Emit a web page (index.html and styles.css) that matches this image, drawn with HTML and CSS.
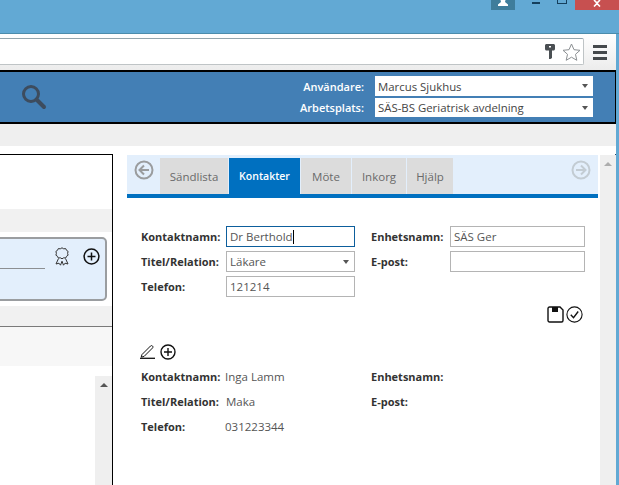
FILE: index.html
```html
<!DOCTYPE html>
<html lang="sv">
<head>
<meta charset="utf-8">
<title>Kontakter</title>
<link rel="stylesheet" href="styles.css">
</head>
<body>
<div class="window">
  <div class="titlebar">
    <div class="avatar"><svg width="12" height="6" viewBox="0 0 12 6"><path d="M3.500 0h5L8 2l3 2.500V6H1V4.500L4 2z" fill="#fff"/></svg></div>
    <div class="win-min"></div>
    <div class="win-max"></div>
    <div class="win-close"><svg width="10" height="7" viewBox="0 0 10 7"><path d="M2 0l3 3 3-3M2 6.500l3-3 3 3" stroke="#fff" stroke-width="1.600" fill="none"/></svg></div>
  </div>
  <div class="chrome">
    <div class="toolbar">
      <div class="address">
        <svg class="key" width="10" height="15" viewBox="0 0 10 15"><path d="M0 1.500C0 .7.700 0 1.500 0h7C9.300 0 10 .7 10 1.500V5c0 .8-.7 1.500-1.500 1.500H7V14l-1.500 1H4V6.500H1.500C.7 6.500 0 5.800 0 5zM4 2v1.500h2V2z" fill="#4a4f53" fill-rule="evenodd"/></svg>
        <svg class="star" width="19" height="18" viewBox="0 0 19 18"><path d="M9.500 1l2.500 5.700 6 .6-4.500 4 1.300 6-5.300-3.100-5.300 3.100 1.300-6-4.500-4 6-.6z" fill="#fff" stroke="#8b8f92" stroke-width="1"/></svg>
      </div>
      <div class="menu"><span></span><span></span><span></span></div>
    </div>
    <header class="app-header">
      <svg class="search" width="26" height="26" viewBox="0 0 26 26"><circle cx="10" cy="10" r="7.500" fill="none" stroke="#3d4c5e" stroke-width="3"/><path d="M15.500 15.500l7.500 7.500" stroke="#3d4c5e" stroke-width="4" stroke-linecap="round"/></svg>
      <div class="user-grid">
        <label class="user-label">Användare:</label>
        <div class="user-select"><span>Marcus Sjukhus</span><i class="caret"></i></div>
        <label class="user-label">Arbetsplats:</label>
        <div class="user-select"><span>SÄS-BS Geriatrisk avdelning</span><i class="caret"></i></div>
      </div>
    </header>
    <div class="strip"></div>
    <main class="main">
      <section class="left">
        <div class="left-top"></div>
        <div class="band"></div>
        <div class="card">
          <div class="card-line"></div>
          <svg class="ribbon" width="14" height="19" viewBox="0 0 14 19"><path d="M7 .8l1.700 1 2-.2.800 1.700 1.600 1.100-.5 1.900.5 1.900-1.600 1.100-.8 1.700-2-.2-1.700 1-1.700-1-2 .2-.8-1.700L.9 8.200l.5-1.900-.5-1.900 1.600-1.100.8-1.700 2 .2z" fill="none" stroke="#333" stroke-width="1"/><path d="M3.500 11.500L1 17l3-.8 1.500 2 1.500-4 1.500 4 1.500-2 3 .8-2.500-5.500" fill="none" stroke="#333" stroke-width="1"/></svg>
          <svg class="plus" width="17" height="17" viewBox="0 0 17 17"><circle cx="8.500" cy="8.500" r="7.400" fill="none" stroke="#111" stroke-width="1.500"/><path d="M8.500 4.500v8M4.500 8.500h8" stroke="#111" stroke-width="1.500"/></svg>
        </div>
        <div class="band band-line"></div>
        <div class="band-light"></div>
        <div class="left-scroll"><i class="up"></i></div>
      </section>
      <section class="right">
        <nav class="tabbar">
          <svg class="nav-arrow" width="20" height="20" viewBox="0 0 20 20"><circle cx="10" cy="10" r="8.500" fill="none" stroke="#9a9c9e" stroke-width="2"/><path d="M15 10H6M10 5.500L5.500 10l4.500 4.500" fill="none" stroke="#9a9c9e" stroke-width="2"/></svg>
          <div class="tab tab-s">Sändlista</div>
          <div class="tab tab-k active">Kontakter</div>
          <div class="tab tab-m">Möte</div>
          <div class="tab tab-i">Inkorg</div>
          <div class="tab tab-h">Hjälp</div>
          <svg class="nav-arrow nav-next" width="20" height="20" viewBox="0 0 20 20"><circle cx="10" cy="10" r="8.500" fill="none" stroke="#c3ccd3" stroke-width="2"/><path d="M5 10h9M10 5.500l4.500 4.500-4.500 4.500" fill="none" stroke="#c3ccd3" stroke-width="2"/></svg>
        </nav>
        <div class="form">
          <label class="lbl">Kontaktnamn:</label>
          <div class="field focus">Dr Berthold<i class="cursor"></i></div>
          <label class="lbl lbl-second">Enhetsnamn:</label>
          <div class="field">SÄS Ger</div>
          <label class="lbl">Titel/Relation:</label>
          <div class="field select">Läkare<i class="caret"></i></div>
          <label class="lbl lbl-second">E-post:</label>
          <div class="field"></div>
          <label class="lbl">Telefon:</label>
          <div class="field">121214</div>
        </div>
        <div class="actions">
          <svg width="17" height="17" viewBox="0 0 17 17"><path d="M1 2.500C1 1.700 1.700 1 2.500 1H13l3 3v10.500c0 .8-.7 1.500-1.500 1.500h-12C1.700 16 1 15.300 1 14.500z" fill="none" stroke="#111" stroke-width="1.400"/><path d="M5 1h6v5H5z" fill="#111"/></svg>
          <svg width="17" height="17" viewBox="0 0 17 17"><circle cx="8.500" cy="8.500" r="7.600" fill="none" stroke="#111" stroke-width="1.100"/><path d="M4.800 8.800l2.700 2.900 4.700-6.200" fill="none" stroke="#111" stroke-width="1.400"/></svg>
        </div>
        <div class="edit-row">
          <svg width="16" height="15" viewBox="0 0 16 15"><path d="M2 10.500L10.500 2c.6-.6 1.400-.6 2 0s.6 1.400 0 2L4 12.500l-2.800.6z" fill="none" stroke="#111" stroke-width="1"/><path d="M0 14.300h15" stroke="#111" stroke-width="1.300"/></svg>
          <svg width="16" height="16" viewBox="0 0 16 16"><circle cx="8" cy="8" r="7" fill="none" stroke="#111" stroke-width="1.400"/><path d="M8 4v8M4 8h8" stroke="#111" stroke-width="1.400"/></svg>
        </div>
        <div class="details">
          <span class="lbl">Kontaktnamn:</span><span class="val">Inga Lamm</span><span class="lbl">Enhetsnamn:</span><span></span>
          <span class="lbl">Titel/Relation:</span><span class="val val-shift">Maka</span><span class="lbl">E-post:</span><span></span>
          <span class="lbl">Telefon:</span><span class="val">031223344</span><span></span><span></span>
        </div>
      </section>
      <aside class="right-scroll"><i class="up up-light"></i></aside>
    </main>
  </div>
</div>
</body>
</html>
```
FILE: styles.css
```css
* { box-sizing: border-box; }
html, body { margin: 0; padding: 0; }
body {
  width: 619px;
  height: 485px;
  overflow: hidden;
  font-family: "Open Sans", "Noto Sans", sans-serif;
  font-size: 11px;
  color: #333;
}
.window {
  width: 619px;
  height: 485px;
  background: #62a9d4;
  display: flex;
  flex-direction: column;
  overflow: hidden;
}
.titlebar {
  height: 34px;
  flex: none;
  display: flex;
  align-items: flex-start;
  border-bottom: 1px solid #4b8cac;
}
.avatar {
  width: 24px;
  height: 10px;
  margin-left: 491px;
  background: #3f7d9b;
  display: flex;
  justify-content: center;
  align-items: flex-start;
}
.win-min { width: 8px; height: 2px; margin: 2px 0 0 17px; background: #153f5c; }
.win-max { width: 10px; height: 4px; margin-left: 17px; border: 1px solid #153f5c; border-top: 0; }
.win-close {
  width: 44px;
  height: 10px;
  margin-left: 8px;
  background: #c75050;
  display: flex;
  justify-content: center;
  align-items: flex-start;
}
.chrome {
  width: 616px;
  flex: 1;
  min-height: 0;
  display: flex;
  flex-direction: column;
  background: #fff;
  border-top-right-radius: 3px;
}
.toolbar {
  height: 36px;
  flex: none;
  padding-top: 4px;
  display: flex;
  align-items: flex-start;
  background: linear-gradient(#fff, #ececec);
}
.address {
  width: 584px;
  height: 27px;
  background: #fff;
  border: 1px solid #bfc4c6;
  border-top-color: #93a5ad;
  border-left: 0;
  border-radius: 0 2px 2px 0;
  display: flex;
  align-items: flex-start;
}
.key { margin: 5px 0 0 545px; }
.star { margin: 4px 0 0 7px; }
.menu {
  width: 14px;
  margin: 7px 0 0 9px;
  display: flex;
  flex-direction: column;
  gap: 3px;
}
.menu span { height: 3px; background: #45494c; }
.app-header {
  height: 54px;
  flex: none;
  background: #437fb5;
  border: solid #000;
  border-width: 2px 1px 2px 0;
  display: flex;
  justify-content: space-between;
  padding: 4px 22px 0 21px;
}
.search { margin-top: 8px; }
.user-grid {
  display: grid;
  grid-template-columns: auto 218px;
  grid-template-rows: 20px 19px;
  column-gap: 11px;
  row-gap: 2px;
  align-items: center;
}
.user-label { color: #fff; text-align: right; font-weight: 600; font-size: 11px; }
.user-select {
  height: 100%;
  background: #fff;
  color: #444;
  font-size: 11.400px;
  padding: 0 5px 0 3px;
  display: flex;
  align-items: center;
  justify-content: space-between;
}
.caret {
  width: 0;
  height: 0;
  border: 3.500px solid transparent;
  border-top: 4px solid #555;
  border-bottom: 0;
  flex: none;
}
.strip { height: 22px; flex: none; background: #efefef; }
.main {
  flex: 1;
  min-height: 0;
  margin-top: 8px;
  display: flex;
  align-items: stretch;
  border-right: 1px solid #2c4c66;
}
.left {
  width: 113px;
  flex: none;
  border-top: 1px solid #000;
  border-right: 1px solid #000;
  display: flex;
  flex-direction: column;
}
.left-top { height: 54px; flex: none; }
.band { height: 23px; flex: none; background: #f1f1f1; }
.band-line { height: 21px; border-bottom: 1px solid #7a7a7a; }
.band-light { height: 39px; flex: none; background: #f7f7f7; }
.card {
  height: 64px;
  flex: none;
  margin: 5px 5px 5px -10px;
  background: #e3effc;
  border: 2px solid #9a9da0;
  border-radius: 5px;
  display: flex;
  align-items: flex-start;
  padding: 8px 5px 0 0;
}
.card-line { width: 53px; height: 22px; border-bottom: 1px solid #8c8f92; flex: none; }
.ribbon { margin-left: 10px; flex: none; }
.plus { margin-left: 14px; margin-top: 1px; flex: none; }
.left-scroll {
  width: 17px;
  flex: 1;
  align-self: flex-end;
  margin-top: 10px;
  background: #efefef;
  display: flex;
  justify-content: center;
  padding-top: 7px;
}
.up {
  width: 0;
  height: 0;
  border: 4px solid transparent;
  border-bottom: 4px solid #555;
  border-top: 0;
}
.up-light { border-bottom-color: #adadad; }
.right {
  width: 471px;
  flex: none;
  margin-left: 14px;
}
.tabbar {
  height: 43px;
  margin-top: 1px;
  padding: 3px 7px 0 7px;
  background: #e3effc;
  border-bottom: 4px solid #0070c0;
  display: flex;
  align-items: stretch;
  column-gap: 1px;
}
.nav-arrow { flex: none; margin-top: 2px; margin-right: 5px; }
.nav-next { margin: 2px 0 0 auto; }
.tab {
  background: #dcdcdc;
  color: #6a6a6a;
  font-size: 11.500px;
  display: flex;
  align-items: center;
  justify-content: center;
}
.tab-s { width: 68px; }
.tab-k { width: 71px; }
.tab-m { width: 50px; }
.tab-i { width: 54px; }
.tab-h { width: 46px; }
.tab.active { background: #0070c0; color: #fff; font-weight: 600; font-size: 10.500px; }
.form {
  margin: 28px 0 0 14px;
  display: grid;
  grid-template-columns: 85px 129px 95px 135px;
  grid-auto-rows: 21px;
  row-gap: 4px;
  align-items: center;
}
.lbl-second { margin-left: 16px; }
.lbl { color: #333; font-weight: 700; font-size: 11px; white-space: nowrap; }
.field {
  height: 21px;
  border: 1px solid #b4b4b4;
  color: #555;
  font-size: 11.500px;
  padding: 0 3px;
  display: flex;
  align-items: center;
  background: #fff;
}
.field.focus { border-color: #0d5e9c; }
.field.select { justify-content: space-between; padding-right: 5px; }
.cursor { width: 1px; height: 14px; background: #000; }
.actions {
  margin-top: 9px;
  height: 17px;
  padding-right: 15px;
  display: flex;
  justify-content: flex-end;
  column-gap: 2px;
}
.edit-row {
  margin-top: 20px;
  height: 17px;
  padding-left: 13px;
  display: flex;
  align-items: center;
  column-gap: 4px;
}
.details {
  margin: 4px 0 0 14px;
  display: grid;
  grid-template-columns: 85px 145px 79px 135px;
  grid-auto-rows: 25px;
  align-items: center;
}
.val { color: #555; font-size: 11.500px; margin-left: -1px; }
.val-shift { margin-left: 0; }
.right-scroll {
  width: 16px;
  flex: none;
  margin: 1px 0 0 2px;
  background: #efefef;
  display: flex;
  justify-content: center;
  padding-top: 7px;
}
```
